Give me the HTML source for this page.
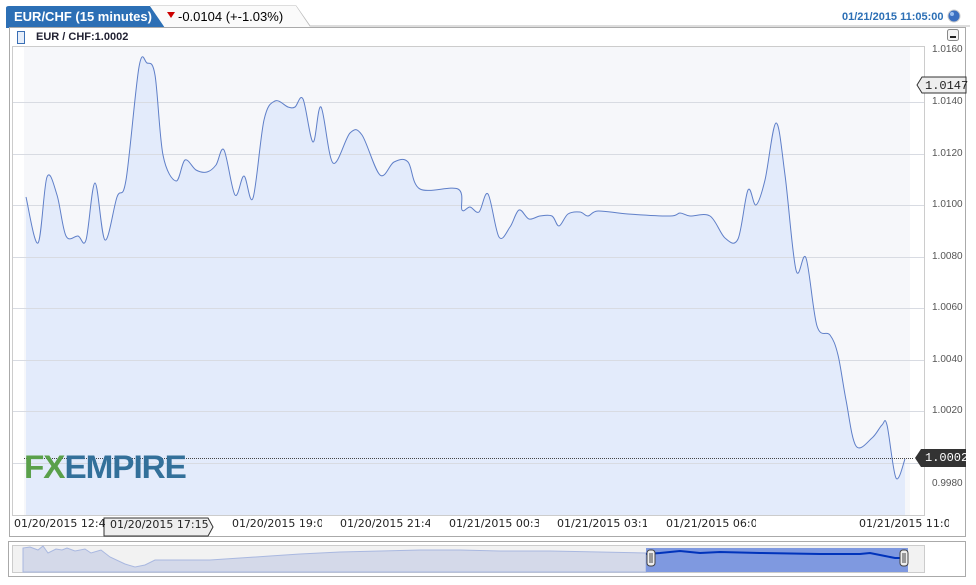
<!DOCTYPE html><html><head><style>
body{margin:0;width:976px;height:585px;background:#fff;font-family:"Liberation Sans",sans-serif;position:relative;overflow:hidden}
.a{position:absolute}
.yl{position:absolute;left:932px;font-size:10px;color:#555}
.xl{position:absolute;top:517px;font-size:11px;color:#222;font-family:"DejaVu Sans",sans-serif}
</style></head><body>
<svg class="a" style="left:0;top:0" width="976" height="585">
<path d="M6 28 L6 8 Q6 6 9 6 L150 6 L165 28 Z" fill="#2c6fb5"/>
<path d="M150 6 L296 6 L310 26 L970 26" fill="none" stroke="#bbb"/>
<path d="M150 6 L296 6 L310 27 L165 27 Z" fill="#fafafa"/>
<polygon points="167,12 175,12 171,18" fill="#c00"/>
<rect x="9.5" y="27.5" width="956" height="509" fill="#fff" stroke="#aaa"/>
<rect x="17.5" y="31.5" width="7" height="12" fill="#e6eefa" stroke="#3a6fb5"/>
<rect x="12.5" y="46.5" width="912" height="469" fill="#fff" stroke="#ccc"/>
<rect x="24" y="47" width="886" height="468" fill="#f6f7fa"/>
<path id="fill" fill="#e3ebfb" d=""/>
<g stroke="#d8dbe2">
<line x1="13" y1="102.5" x2="924" y2="102.5"/><line x1="13" y1="154.5" x2="924" y2="154.5"/><line x1="13" y1="205.5" x2="924" y2="205.5"/><line x1="13" y1="257.5" x2="924" y2="257.5"/><line x1="13" y1="308.5" x2="924" y2="308.5"/><line x1="13" y1="360.5" x2="924" y2="360.5"/><line x1="13" y1="411.5" x2="924" y2="411.5"/><line x1="13" y1="463.5" x2="924" y2="463.5"/>
</g>
<path id="line" fill="none" stroke="#5f7fc8" stroke-width="1" d=""/>
<line x1="24" y1="458.5" x2="914" y2="458.5" stroke="#444" stroke-dasharray="1,1"/>
<polygon points="917,85 922,77 966,77 966,93 922,93" fill="#eee" stroke="#333"/>
<polygon points="915,458 921,449 966,449 966,467 921,467" fill="#333"/>
<rect x="947.5" y="29.5" width="11" height="11" rx="2" fill="#f4f4f4" stroke="#888"/>
<rect x="950" y="36" width="6" height="2" fill="#222"/>
<circle cx="954" cy="16" r="6" fill="#3b6fc0" stroke="#ccc"/><circle cx="952" cy="14" r="2" fill="#9cc0f0"/>
<polygon points="104,518 208,518 213,527 208,536 104,536" fill="#eee" stroke="#333"/>
<rect x="8.5" y="541.5" width="957" height="35" fill="#fff" stroke="#aaa"/>
<rect x="12.5" y="545.5" width="912" height="27" fill="#f2f2f2" stroke="#ccc"/>
<polygon fill="#d4d9e9" stroke="#a9b8e0" points="23,572 23,548 30,547 38,550 43,546 48,553 56,549 62,550 67,548 75,551 85,549 91,553 101,550 110,557 125,564 135,567 145,565 155,560 180,560 210,560 240,558 270,556 300,554 340,552 380,551 420,550 460,550 500,551 550,551 600,552 646,553 646,572"/>
<rect x="646" y="548" width="262" height="24" fill="#7f99e0"/>
<polyline fill="none" stroke="#0033bb" stroke-width="2" points="646,554 660,553 680,551 700,553 720,552 760,553 820,554 860,554 870,553 885,556 895,558 906,558"/>
<rect x="647" y="550" width="8" height="16" rx="3" fill="#eee" stroke="#444"/>
<line x1="650" y1="553" x2="650" y2="563" stroke="#444"/><line x1="652" y1="553" x2="652" y2="563" stroke="#444"/>
<rect x="900" y="550" width="8" height="16" rx="3" fill="#eee" stroke="#444"/>
<line x1="903" y1="553" x2="903" y2="563" stroke="#444"/><line x1="905" y1="553" x2="905" y2="563" stroke="#444"/>
</svg>
<script>
var p=[[26,197],[38,243],[47,177],[57,195],[66,236],[78,236],[86,240],[95,183],[105,240],[117,197],[126,180],[139,67],[147,63],[155,75],[163,155],[176,181],[185,160],[196,170],[207,172],[216,165],[224,150],[235,195],[244,176],[253,198],[264,120],[275,101],[288,107],[295,107],[303,99],[313,142],[321,107],[333,163],[350,133],[362,135],[380,175],[394,162],[408,162],[420,189],[458,189],[462,210],[470,207],[479,212],[488,194],[499,237],[510,227],[519,210],[529,219],[540,216],[552,216],[559,226],[568,214],[580,212],[588,216],[598,211],[628,214],[670,216],[680,213],[690,216],[710,216],[725,238],[738,239],[748,190],[756,205],[765,180],[776,123],[785,175],[796,270],[806,258],[817,326],[830,335],[838,355],[846,400],[856,446],[872,438],[882,425],[887,425],[896,478],[905,459]];
var d="M"+p[0];
for(var i=0;i<p.length-1;i++){var a=p[i>0?i-1:0],b=p[i],c=p[i+1],e=p[i+2<p.length?i+2:i+1];
d+=" C"+(b[0]+(c[0]-a[0])/6)+","+(b[1]+(c[1]-a[1])/6)+" "+(c[0]-(e[0]-b[0])/6)+","+(c[1]-(e[1]-b[1])/6)+" "+c[0]+","+c[1];}
document.getElementById("line").setAttribute("d",d);
document.getElementById("fill").setAttribute("d",d+" L905,515 L26,515 Z");
</script>
<div class="a" style="left:14px;top:9px;font-size:13px;font-weight:bold;color:#fff">EUR/CHF (15 minutes)</div>
<div class="a" style="left:178px;top:9px;font-size:13px;color:#000">-0.0104 (+-1.03%)</div>
<div class="a" style="left:842px;top:11px;font-size:11px;font-weight:bold;color:#2c6fb5">01/21/2015 11:05:00</div>
<div class="a" style="left:36px;top:31px;font-size:11px;font-weight:bold;color:#223">EUR / CHF:1.0002</div>
<div class="yl" style="top:44px">1.0160</div><div class="yl" style="top:96px">1.0140</div><div class="yl" style="top:148px">1.0120</div><div class="yl" style="top:199px">1.0100</div><div class="yl" style="top:251px">1.0080</div><div class="yl" style="top:302px">1.0060</div><div class="yl" style="top:354px">1.0040</div><div class="yl" style="top:405px">1.0020</div><div class="yl" style="top:478px">0.9980</div>
<div class="a" style="left:925px;top:79px;font-size:12px;font-family:'Liberation Mono',monospace;color:#222">1.0147</div>
<div class="a" style="left:925px;top:451px;font-size:12px;font-family:'Liberation Mono',monospace;color:#fff">1.0002</div>
<div class="a" style="left:24px;top:447px;font-size:32px;font-weight:bold;letter-spacing:-1px;line-height:40px;transform:scaleX(1.04);transform-origin:0 0"><span style="color:#5aa04a">FX</span><span style="color:#33709a">EMPIRE</span></div>
<div class="xl" style="left:14px;width:92px;overflow:hidden;white-space:nowrap">01/20/2015 12:45</div>
<div class="xl" style="left:110px;top:518px;width:100px;overflow:hidden;white-space:nowrap">01/20/2015 17:15</div>
<div class="xl" style="left:232px;width:90px;overflow:hidden;white-space:nowrap">01/20/2015 19:00</div>
<div class="xl" style="left:340px;width:90px;overflow:hidden;white-space:nowrap">01/20/2015 21:45</div>
<div class="xl" style="left:449px;width:90px;overflow:hidden;white-space:nowrap">01/21/2015 00:30</div>
<div class="xl" style="left:557px;width:90px;overflow:hidden;white-space:nowrap">01/21/2015 03:15</div>
<div class="xl" style="left:666px;width:90px;overflow:hidden;white-space:nowrap">01/21/2015 06:00</div>
<div class="xl" style="left:859px;width:90px;overflow:hidden;white-space:nowrap">01/21/2015 11:00</div>
</body></html>
